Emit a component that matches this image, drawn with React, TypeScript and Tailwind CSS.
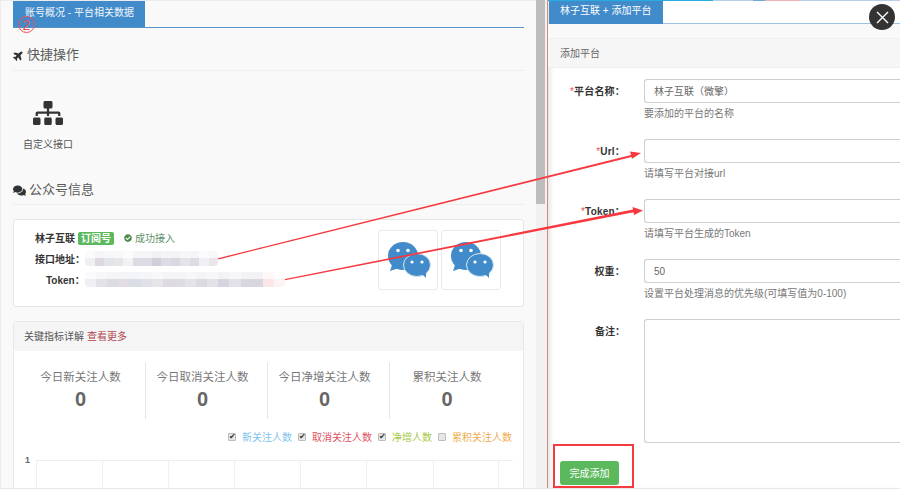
import React from "react";
import { FaPlane, FaSitemap, FaComments, FaCheckCircle } from "react-icons/fa";

const font = "font-['Liberation_Sans','Noto_Sans_CJK_SC',sans-serif]";

// mosaic used to hide the address and token
const mosaicA = [
  "bg-[#f0eff3]", "bg-[#dcd9df]", "bg-[#e2e4ec]", "bg-[#e6e5ea]", "bg-[#f2f1f4]", "bg-[#dddbe2]", "bg-[#dcdbe3]",
  "bg-[#d0cfda]", "bg-[#dddbe4]", "bg-[#d9d8e1]", "bg-[#e4e3e9]", "bg-[#dddce3]", "bg-[#f0eff3]", "bg-[#e9e5e9]",
];
const mosaicB = [
  "bg-[#f0eff3]", "bg-[#e3e2e8]", "bg-[#dcdbe2]", "bg-[#e1dde2]", "bg-[#d8dde6]", "bg-[#e1e2e9]", "bg-[#e6e5ea]",
  "bg-[#dddbe1]", "bg-[#dedbe2]", "bg-[#e4e3e8]", "bg-[#dadae2]", "bg-[#e3e2e8]", "bg-[#d6d5df]", "bg-[#e3e2e8]",
  "bg-[#d8d7e0]", "bg-[#d8d7e0]", "bg-[#fde6e8]", "bg-[#fdf3f4]",
];

function Mosaic({ cells }: { cells: string[] }) {
  return (
    <div className="relative flex h-[15px] flex-1 overflow-hidden rounded-sm blur-[0.6px]">
      {cells.map((c, i) => (
        <div key={i} className={`flex-1 ${c}`} />
      ))}
      <div className="absolute inset-x-0 top-0 h-[7px] bg-white/70" />
    </div>
  );
}

function SectionTitle({ icon, title }: { icon: React.ReactNode; title: string }) {
  return (
    <div className="flex items-center gap-[3px] text-[13px] leading-[20px] text-[#5a5a5a]">
      {icon}
      <span>{title}</span>
    </div>
  );
}

function WechatIcon() {
  return (
    <div className="flex h-[60px] w-[60px] items-center justify-center rounded-[3px] border border-[#eaeaea] bg-white">
      <svg width="46" height="38" viewBox="0 0 46 38">
        <ellipse cx="18" cy="15" rx="15" ry="14" fill="#428bca" />
        <path d="M7 24 L5 30 L14 27 Z" fill="#428bca" />
        <ellipse cx="32" cy="24" rx="13.5" ry="11.5" fill="#428bca" stroke="#dfe9f2" strokeWidth="1" />
        <path d="M37 33 L41 37 L41 31 Z" fill="#428bca" />
        <circle cx="13" cy="9.5" r="1.8" fill="#fff" />
        <circle cx="23" cy="9.5" r="1.8" fill="#fff" />
        <circle cx="27" cy="21" r="1.6" fill="#fff" />
        <circle cx="37" cy="21" r="1.6" fill="#fff" />
      </svg>
    </div>
  );
}

const stats = ["今日新关注人数", "今日取消关注人数", "今日净增关注人数", "累积关注人数"];

const legend = [
  { label: "新关注人数", color: "text-[#7cc3ee]", on: true },
  { label: "取消关注人数", color: "text-[#e0525f]", on: true },
  { label: "净增人数", color: "text-[#a9c94a]", on: true },
  { label: "累积关注人数", color: "text-[#f0ad4e]", on: false },
];

function LegendBox({ on }: { on: boolean }) {
  return (
    <span className="flex h-[8px] w-[8px] items-center justify-center rounded-[1px] border border-[#bdbdbd] bg-[#e6e6e6] text-[8px] leading-none text-[#333]">
      {on ? "✔" : ""}
    </span>
  );
}

function FormRow({
  label,
  required,
  value,
  help,
}: {
  label: string;
  required?: boolean;
  value?: string;
  help?: string;
}) {
  return (
    <div className="flex h-[60px] items-start">
      <label className="h-[24px] w-[77px] text-right text-[10px] font-bold leading-[26px] tracking-[0.2px] text-[#333]">
        {required && <span className="font-normal text-[#e8505b]">*</span>}
        {label}
      </label>
      <div className="ml-[19px] flex-1">
        <div className="h-[24px] rounded-l-[3px] border border-r-0 border-[#cfcfcf] bg-white pl-[9px] text-[10px] leading-[24px] text-[#666]">
          {value}
        </div>
        {help && <p className="mt-[4px] text-[10px] leading-[13px] text-[#777]">{help}</p>}
      </div>
    </div>
  );
}

export default function App() {
  return (
    <div className={`relative flex h-[489px] w-[900px] overflow-hidden border-b border-[#e8e8e8] bg-[#f9f9f9] ${font}`}>
      {/* Left page */}
      <div className="w-[536px] shrink-0 border-l border-t border-[#ececec] pl-[12px] pr-[12px]">
        <div className="h-[27px] border-b border-[#5b93c7]">
          <div className="h-[26px] w-[132px] bg-[#428bca] pl-[12px] text-[10px] leading-[24px] text-[#f2f7fb]">
            账号概况 - 平台相关数据
          </div>
        </div>

        <div className="flex h-[43px] items-end border-b border-[#eeeeee] pb-[5px]">
          <SectionTitle icon={<FaPlane className="-rotate-45 text-[11px] text-[#333]" />} title="快捷操作" />
        </div>

        <div className="flex h-[104px] w-[70px] flex-col items-center pt-[27px]">
          <FaSitemap className="h-[30px] w-[30px] text-[#333]" />
          <span className="mt-[10px] text-[10px] leading-[14px] text-[#555]">自定义接口</span>
        </div>

        <div className="flex h-[30px] items-end border-b border-[#eeeeee] pb-[4px]">
          <SectionTitle icon={<FaComments className="text-[13px] text-[#333]" />} title="公众号信息" />
        </div>

        {/* Account card */}
        <div className="mt-[14px] flex h-[88px] rounded-[3px] border border-[#e6e6e6] bg-white pl-[21px] pr-[22px]">
          <div className="flex-1 text-[10px] text-[#333]">
            <div className="mt-[11px] flex h-[14px] items-center">
              <b>林子互联</b>
              <span className="ml-[3px] h-[13px] w-[36px] rounded-[2px] bg-[#5cb85c] text-center text-[10px] font-bold leading-[13px] text-white">
                订阅号
              </span>
              <FaCheckCircle className="ml-[10px] text-[8px] text-[#4f8a4f]" />
              <span className="ml-[3px] text-[#5f8f6a]">成功接入</span>
            </div>
            <div className="mt-[6px] flex h-[15px] items-center">
              <b className="w-[50px] shrink-0 pt-[1px]">接口地址：</b>
              <div className="flex w-[133px]">
                <Mosaic cells={mosaicA} />
              </div>
            </div>
            <div className="mt-[6px] flex h-[15px] items-center">
              <b className="w-[50px] shrink-0 pl-[11px] pt-[2px]">Token：</b>
              <div className="flex w-[200px]">
                <Mosaic cells={mosaicB} />
              </div>
            </div>
          </div>
          <div className="mt-[10px] flex gap-[3px]">
            <WechatIcon />
            <WechatIcon />
          </div>
        </div>

        {/* Metrics panel */}
        <div className="mt-[14px] h-[170px] rounded-t-[3px] border border-[#e8e8e8] bg-white">
          <div className="flex h-[29px] items-center bg-[#f5f5f5] pl-[10px] text-[10px]">
            <span className="text-[#555]">关键指标详解</span>
            <span className="ml-[3px] text-[#b0474f]">查看更多</span>
          </div>
          <div className="px-[10px] pt-[11px]">
            <div className="flex">
              {stats.map((s, i) => (
                <div
                  key={s}
                  className={`flex h-[57px] w-[122px] flex-col items-center pr-[8px] pt-[7px] ${i < 3 ? "border-r border-[#e6e6e6]" : ""}`}
                >
                  <span className="text-[11.5px] leading-[16px] text-[#777]">{s}</span>
                  <span className="mt-[2px] text-[20px] font-bold leading-[24px] text-[#666]">0</span>
                </div>
              ))}
            </div>
            <div className="mt-[11px] flex h-[14px] items-center justify-end gap-[6px] pr-[1px]">
              {legend.map((l) => (
                <div key={l.label} className="flex items-center gap-[6px]">
                  <LegendBox on={l.on} />
                  <span className={`text-[10px] ${l.color}`}>{l.label}</span>
                </div>
              ))}
            </div>
            <div className="relative ml-[12px] mt-[16px] flex h-[40px] border-t border-[#eeeeee]">
              <span className="absolute -left-[11px] -top-[7px] text-[9px] font-bold leading-[12px] text-[#666]">1</span>
              {[66, 66, 66, 66, 66, 67, 65, 14].map((w, i) => (
                <div key={i} className="border-l border-[#f0f0f0]" style={{ width: w }} />
              ))}
            </div>
          </div>
        </div>
      </div>

      {/* Page scrollbar */}
      <div className="w-[11px] shrink-0 bg-[#f1f1f1]">
        <div className="h-[204px] w-[9px] bg-[#bdbdbd]" />
      </div>

      {/* Right slide-in panel */}
      <div className="w-[1px] shrink-0 bg-[#cf8f7a]" />
      <div className="flex-1 bg-white shadow-[inset_5px_0_5px_-3px_rgba(0,0,0,0.12)]">
        {/* sliver of the page behind, left at the very top */}
        <div className="flex h-[1px]">
          <div className="w-[165px] bg-[#29abe2]" />
          <div className="w-[40px] bg-[#b8cfe8]" />
          <div className="w-[12px] bg-[#6fa8dc]" />
          <div className="w-[35px] bg-[#eeb4b4]" />
          <div className="flex-1 bg-[#b8cfe8]" />
        </div>
        <div className="ml-[1px] h-[23px] border-b border-[#9dbfe0]">
          <div className="h-[23px] w-[114px] bg-[#428bca] pl-[11px] text-[10px] leading-[20px] text-white">
            林子互联 + 添加平台
          </div>
        </div>
        <div className="h-[14px] bg-[#f9f9f9]" />
        <div className="flex h-[30px] items-center border-y border-[#efefef] bg-[#f6f6f6] pl-[12px] text-[10px] text-[#666]">
          添加平台
        </div>
        <div className="pt-[11px]">
          <FormRow label="平台名称：" required value="林子互联（微擎）" help="要添加的平台的名称" />
          <FormRow label="Url：" required help="请填写平台对接url" />
          <FormRow label="Token：" required help="请填写平台生成的Token" />
          <FormRow label="权重：" value="50" help="设置平台处理消息的优先级(可填写值为0-100)" />
          <div className="flex items-start">
            <label className="h-[24px] w-[77px] text-right text-[10px] font-bold leading-[26px] text-[#333]">
              备注：
            </label>
            <div className="ml-[19px] h-[124px] flex-1 rounded-l-[3px] border border-r-0 border-[#cfcfcf] bg-white" />
          </div>
        </div>
        <button className="ml-[12px] mt-[18px] h-[24px] w-[59px] rounded-[3px] bg-[#5cb85c] text-[10px] text-white">
          完成添加
        </button>
      </div>

      {/* Annotations drawn over the screenshot */}
      <span className="absolute left-[18px] top-[16px] flex h-[17px] w-[17px] items-center justify-center rounded-full border border-[#f0505a] text-[14px] leading-none text-[#f0505a]">
        2
      </span>
      <svg className="pointer-events-none absolute left-0 top-0" width="900" height="489" viewBox="0 0 900 489">
        <polygon points="218,258.2 631,155 630,151.5 641,153 632,158.8 631.5,157 218.5,259.4" fill="#f8373f" />
        <polygon points="285,279 633,209.6 632.5,207 643,210.6 634,215 633.5,212.2 285,280.2" fill="#f8373f" />
      </svg>
      <div className="absolute left-[553px] top-[444px] h-[44px] w-[81px] border-2 border-[#f53a40]" />
      <div className="absolute left-[869px] top-[4px] flex h-[26px] w-[26px] items-center justify-center rounded-full bg-[#333]">
        <svg width="13" height="13" viewBox="0 0 13 13">
          <path d="M1 1 L12 12 M12 1 L1 12" stroke="#fff" strokeWidth="1.4" />
        </svg>
      </div>
    </div>
  );
}
